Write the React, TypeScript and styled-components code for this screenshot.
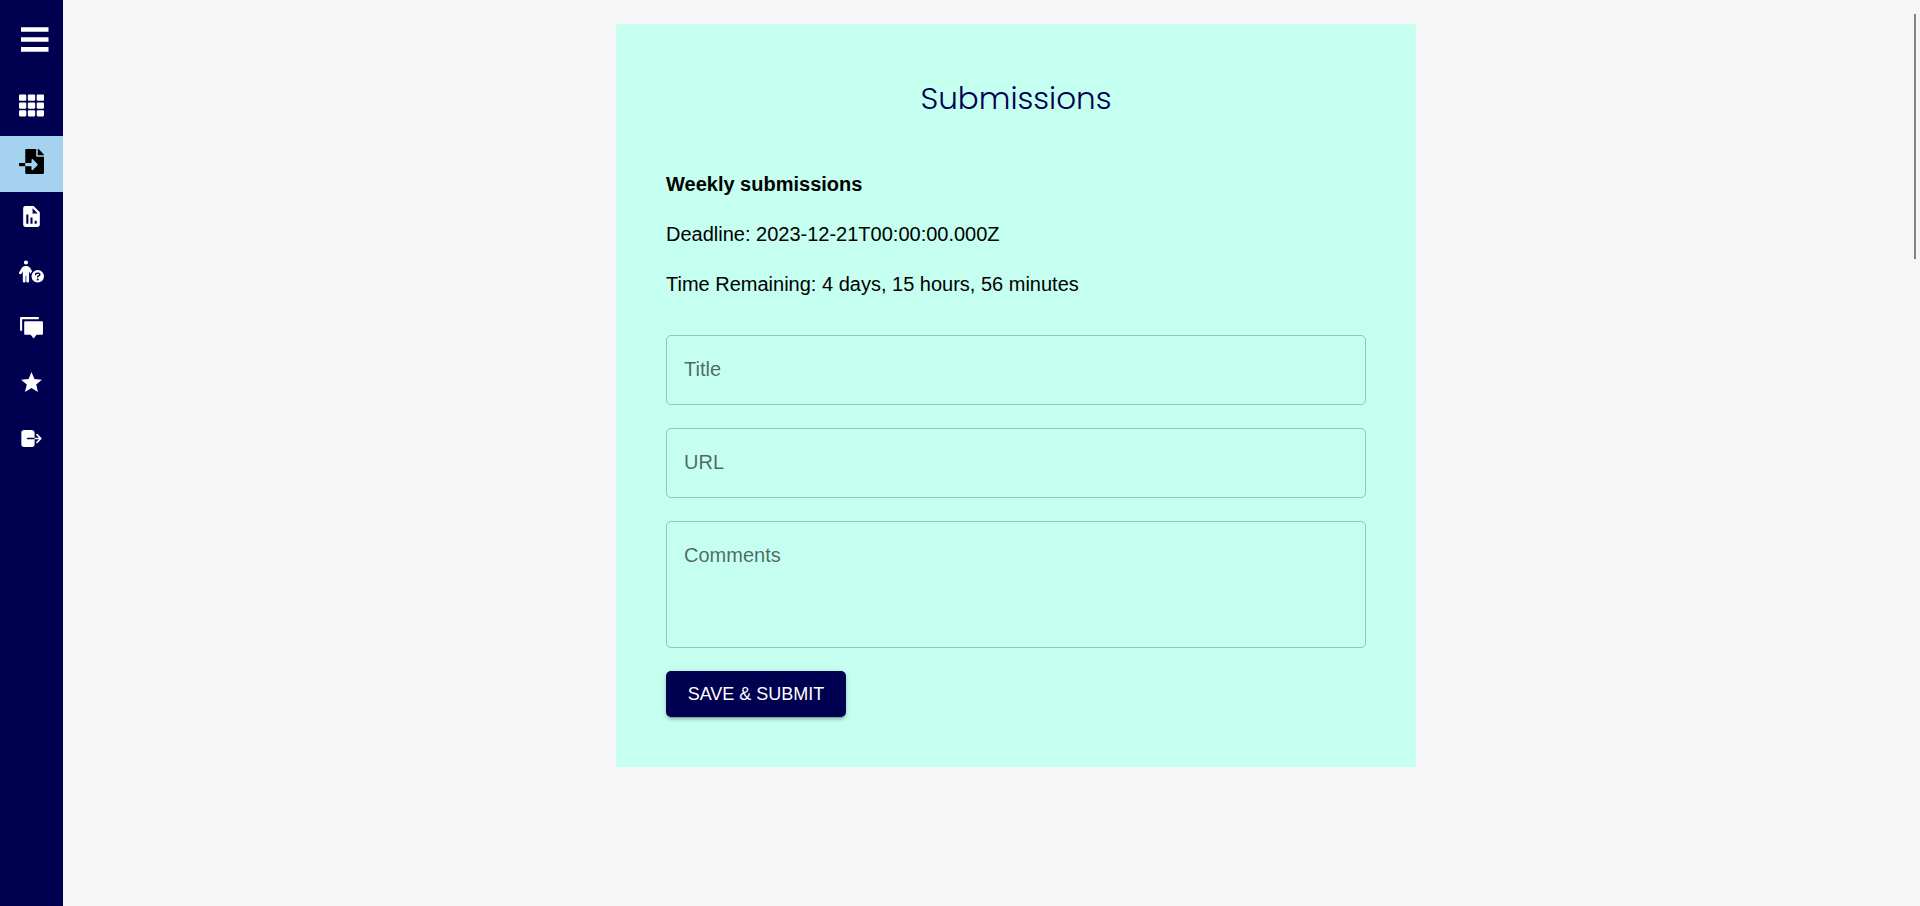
import React from 'react';
import styled, { createGlobalStyle } from 'styled-components';
import { FaTh, FaFileImport } from 'react-icons/fa';
import { FaPersonCircleQuestion } from 'react-icons/fa6';
import { BiSolidReport } from 'react-icons/bi';
import { RiDiscussFill } from 'react-icons/ri';
import { MdStar } from 'react-icons/md';
import { IoLogOut } from 'react-icons/io5';

const GlobalStyle = createGlobalStyle`
  *, *::before, *::after { box-sizing: border-box; }
  body {
    margin: 0;
    background: #f6f6f6;
    color: #000;
    font: 20px/30px "Liberation Sans", Arial, sans-serif;
  }
`;

const Layout = styled.div`
  display: flex;
  min-height: 100vh;
`;

const Sidebar = styled.aside`
  flex: none;
  width: 63px;
  background: #000050;
  color: #fff;
`;

const MenuButton = styled.button`
  display: block;
  width: 100%;
  height: 81px;
  padding: 0 0 2px 21px;
  border: 0;
  background: none;
  color: inherit;
  text-align: left;
  cursor: pointer;

  svg { display: block; }
`;

const NavList = styled.nav`
  display: flex;
  flex-direction: column;
  height: 388px;
`;

const NavLink = styled.a<{ $active?: boolean }>`
  flex: 1;
  display: flex;
  align-items: center;
  justify-content: center;
  padding-bottom: 6px;
  background: ${(p) => (p.$active ? '#a5d2ee' : 'transparent')};
  color: ${(p) => (p.$active ? '#000' : '#fff')};
`;

const Main = styled.main`
  flex: 1;
  min-width: 0;
  padding: 24px 0 24px 49px;
`;

const Card = styled.section`
  max-width: 800px;
  margin: 0 auto;
  padding: 50px;
  background: #c5ffef;
`;

const Heading = styled.h1`
  margin: 0 0 47px;
  color: #000050;
  font: 300 31px/48px Poppins, Inter, sans-serif;
  text-align: center;
`;

const Info = styled.p<{ $bold?: boolean }>`
  margin: 0 0 20px;
  font-weight: ${(p) => (p.$bold ? 700 : 400)};
`;

const Form = styled.form`
  display: flex;
  flex-direction: column;
  align-items: flex-start;
  gap: 23px;
  padding-top: 16px;
`;

const fieldStyles = `
  display: block;
  width: 100%;
  margin: 0;
  border: 1px solid rgba(0, 0, 0, 0.23);
  border-radius: 5px;
  background: transparent;
  color: #000;
  font: inherit;

  &::placeholder { color: rgba(0, 0, 0, 0.6); opacity: 1; }
`;

const TextInput = styled.input`
  ${fieldStyles}
  height: 70px;
  padding: 0 17px 2px;
`;

const TextArea = styled.textarea`
  ${fieldStyles}
  height: 127px;
  padding: 18px 17px;
  resize: none;
`;

const SubmitButton = styled.button`
  min-width: 180px;
  padding: 8px 20px;
  border: 0;
  border-radius: 5px;
  background: #000050;
  color: #fff;
  font: 500 18px/30px "Liberation Sans", Arial, sans-serif;
  text-transform: uppercase;
  cursor: pointer;
  box-shadow: 0 4px 1px -3px rgba(0, 0, 0, 0.2), 0 3px 3px 0 rgba(0, 0, 0, 0.14),
    0 1px 6px 0 rgba(0, 0, 0, 0.12);
`;

const ScrollThumb = styled.div`
  position: fixed;
  top: 14px;
  right: 4px;
  width: 2px;
  height: 245px;
  background: #858585;
`;

const navItems = [
  { label: 'Dashboard', Icon: FaTh },
  { label: 'Submissions', Icon: FaFileImport, active: true },
  { label: 'Reports', Icon: BiSolidReport },
  { label: 'Help', Icon: FaPersonCircleQuestion },
  { label: 'Discussions', Icon: RiDiscussFill },
  { label: 'Favourites', Icon: MdStar },
  { label: 'Log out', Icon: IoLogOut },
];

const BarsIcon = () => (
  <svg width="28" height="25" viewBox="0 0 28 25" fill="currentColor" aria-hidden="true">
    <path d="M0 .3h27.5v4.4H0zM0 10.3h27.5v4.4H0zM0 20.1h27.5v4.6H0z" />
  </svg>
);

export default function App() {
  return (
    <>
      <GlobalStyle />
      <Layout>
        <Sidebar>
          <MenuButton type="button" aria-label="Toggle menu">
            <BarsIcon />
          </MenuButton>
          <NavList>
            {navItems.map(({ label, Icon, active }) => (
              <NavLink
                key={label}
                href="#"
                aria-label={label}
                aria-current={active ? 'page' : undefined}
                $active={active}
              >
                <Icon size={25} />
              </NavLink>
            ))}
          </NavList>
        </Sidebar>
        <Main>
          <Card>
            <Heading>Submissions</Heading>
            <Info $bold>Weekly submissions</Info>
            <Info>Deadline: 2023-12-21T00:00:00.000Z</Info>
            <Info>Time Remaining: 4 days, 15 hours, 56 minutes</Info>
            <Form onSubmit={(e) => e.preventDefault()}>
              <TextInput type="text" name="title" aria-label="Title" placeholder="Title" />
              <TextInput type="text" name="url" aria-label="URL" placeholder="URL" />
              <TextArea name="comments" aria-label="Comments" placeholder="Comments" />
              <SubmitButton type="submit">Save &amp; Submit</SubmitButton>
            </Form>
          </Card>
        </Main>
      </Layout>
      <ScrollThumb />
    </>
  );
}
